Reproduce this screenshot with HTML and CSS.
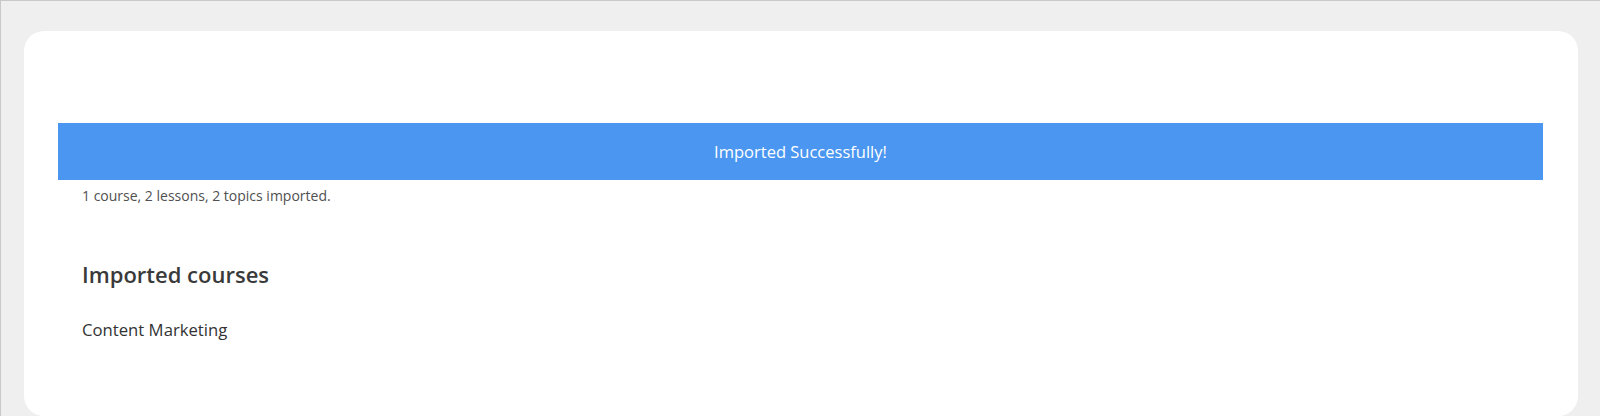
FILE: index.html
```html
<!DOCTYPE html>
<html lang="en">
<head>
<meta charset="utf-8">
<title>Import</title>
<link rel="stylesheet" href="styles.css">
</head>
<body>
<div class="page">
  <main class="card">
    <div class="notice">Imported Successfully!</div>
    <p class="summary">1 course, 2 lessons, 2 topics imported.</p>
    <h2 class="heading">Imported courses</h2>
    <p class="course">Content Marketing</p>
  </main>
</div>
</body>
</html>
```
FILE: styles.css
```css
html, body {
  margin: 0;
  padding: 0;
}
body {
  background: #efefef;
  font-family: "Open Sans", "Noto Sans", sans-serif;
  overflow: hidden;
}
.page {
  box-sizing: border-box;
  height: 416px;
  border-top: 1px solid #c9c9c9;
  border-left: 1px solid #c9c9c9;
  padding: 30px 22px 0 23px;
}
.card {
  box-sizing: border-box;
  background: #ffffff;
  border-radius: 20px;
  height: 385px;
  padding: 92px 35px 0 34px;
}
.notice {
  background: #4a96f0;
  color: #ffffff;
  height: 57px;
  line-height: 57px;
  text-align: center;
  font-size: 16.5px;
}
.summary {
  margin: 6px 0 0 24px;
  font-size: 14px;
  line-height: 20px;
  color: #505050;
}
.heading {
  margin: 53px 0 0 24px;
  font-size: 22px;
  line-height: 30px;
  font-weight: 600;
  color: #3a3a3a;
}
.course {
  margin: 29px 0 0 24px;
  font-size: 16.7px;
  line-height: 24px;
  color: #333333;
}
```
